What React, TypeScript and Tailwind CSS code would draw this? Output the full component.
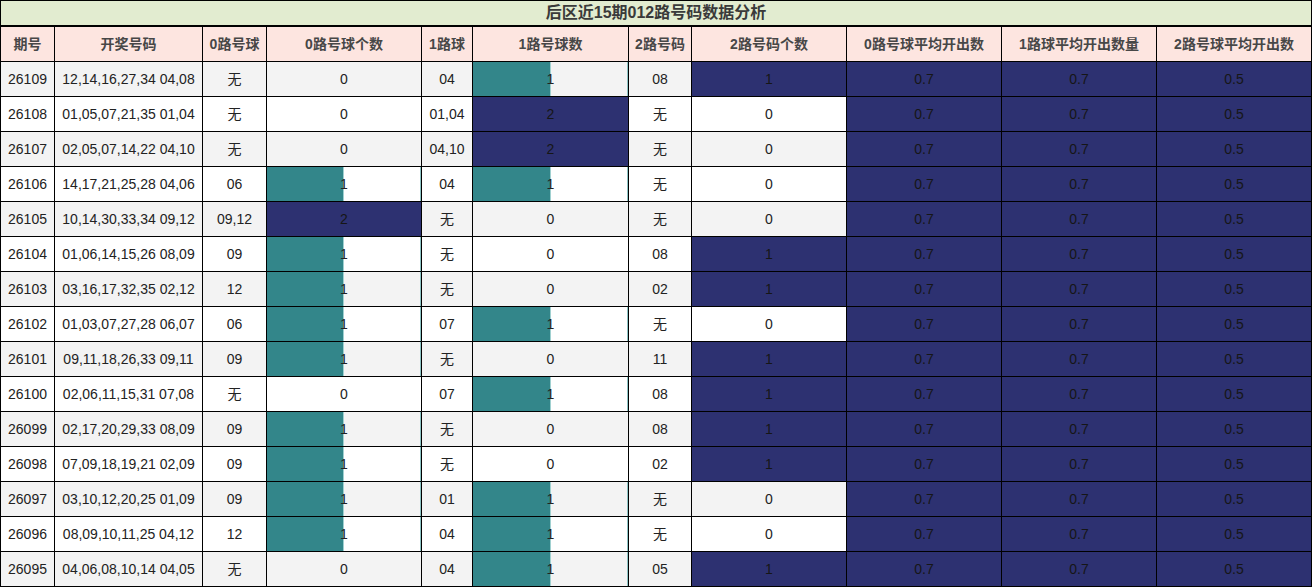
type Row = {
  issue: string;
  draw: string;
  r0: string;
  c0: number;
  r1: string;
  c1: number;
  r2: string;
  c2: number;
};

const rows: Row[] = [
  { issue: "26109", draw: "12,14,16,27,34 04,08", r0: "无", c0: 0, r1: "04", c1: 1, r2: "08", c2: 1 },
  { issue: "26108", draw: "01,05,07,21,35 01,04", r0: "无", c0: 0, r1: "01,04", c1: 2, r2: "无", c2: 0 },
  { issue: "26107", draw: "02,05,07,14,22 04,10", r0: "无", c0: 0, r1: "04,10", c1: 2, r2: "无", c2: 0 },
  { issue: "26106", draw: "14,17,21,25,28 04,06", r0: "06", c0: 1, r1: "04", c1: 1, r2: "无", c2: 0 },
  { issue: "26105", draw: "10,14,30,33,34 09,12", r0: "09,12", c0: 2, r1: "无", c1: 0, r2: "无", c2: 0 },
  { issue: "26104", draw: "01,06,14,15,26 08,09", r0: "09", c0: 1, r1: "无", c1: 0, r2: "08", c2: 1 },
  { issue: "26103", draw: "03,16,17,32,35 02,12", r0: "12", c0: 1, r1: "无", c1: 0, r2: "02", c2: 1 },
  { issue: "26102", draw: "01,03,07,27,28 06,07", r0: "06", c0: 1, r1: "07", c1: 1, r2: "无", c2: 0 },
  { issue: "26101", draw: "09,11,18,26,33 09,11", r0: "09", c0: 1, r1: "无", c1: 0, r2: "11", c2: 1 },
  { issue: "26100", draw: "02,06,11,15,31 07,08", r0: "无", c0: 0, r1: "07", c1: 1, r2: "08", c2: 1 },
  { issue: "26099", draw: "02,17,20,29,33 08,09", r0: "09", c0: 1, r1: "无", c1: 0, r2: "08", c2: 1 },
  { issue: "26098", draw: "07,09,18,19,21 02,09", r0: "09", c0: 1, r1: "无", c1: 0, r2: "02", c2: 1 },
  { issue: "26097", draw: "03,10,12,20,25 01,09", r0: "09", c0: 1, r1: "01", c1: 1, r2: "无", c2: 0 },
  { issue: "26096", draw: "08,09,10,11,25 04,12", r0: "12", c0: 1, r1: "04", c1: 1, r2: "无", c2: 0 },
  { issue: "26095", draw: "04,06,08,10,14 04,05", r0: "无", c0: 0, r1: "04", c1: 1, r2: "05", c2: 1 },
];

const headers = [
  "期号",
  "开奖号码",
  "0路号球",
  "0路号球个数",
  "1路球",
  "1路号球数",
  "2路号码",
  "2路号码个数",
  "0路号球平均开出数",
  "1路球平均开出数量",
  "2路号球平均开出数",
];

const grid =
  "grid grid-cols-[54px_148px_64px_155px_51px_156px_63px_155px_155px_155px_156px]";
const cell = "border-l border-black flex items-center justify-center";

// count cell with data bar: 1 = half teal bar, 2 = full navy
const BarCell = ({ value }: { value: number }) => {
  if (value >= 2) {
    return <div className={`${cell} bg-[#2d3171] text-[#161616]`}>{value}</div>;
  }
  return (
    <div className={`${cell} relative`}>
      {value > 0 && (
        <>
          <div
            className="absolute left-0 top-0 bottom-0 bg-[#33868a] border-r border-[#9fd0d0]"
            style={{ width: `${(value / 2) * 100}%` }}
          />
          <div className="absolute right-0 top-0 bottom-0 w-px bg-[#8cc3c3]" />
        </>
      )}
      <span className="relative">{value}</span>
    </div>
  );
};

export default function App() {
  return (
    <div
      className="w-[1312px] h-[587px] bg-white text-[14px] text-[#222]"
      style={{ fontFamily: '"Liberation Sans", "Noto Sans CJK SC", sans-serif' }}
    >
      <div className="border-t border-black">
        {/* title */}
        <div className="h-[26px] border-x border-b-2 border-black bg-[#e2ecd0] flex items-center justify-center text-[16px] font-bold text-[#3a3a3a] leading-none">
          后区近15期012路号码数据分析
        </div>

        {/* header */}
        <div className={`${grid} h-[35px] border-b border-black bg-[#fde5e0]`}>
          {headers.map((h, i) => (
            <div
              key={h}
              className={`${cell} font-bold text-[#474747] ${i === headers.length - 1 ? "border-r" : ""}`}
            >
              {h}
            </div>
          ))}
        </div>

        {/* rows */}
        {rows.map((r, idx) => (
          <div
            key={r.issue}
            className={`${grid} h-[35px] border-b border-black ${idx % 2 === 0 ? "bg-[#f3f3f3]" : "bg-white"}`}
          >
            <div className={cell}>{r.issue}</div>
            <div className={cell}>{r.draw}</div>
            <div className={cell}>{r.r0}</div>
            <BarCell value={r.c0} />
            <div className={cell}>{r.r1}</div>
            <BarCell value={r.c1} />
            <div className={cell}>{r.r2}</div>
            <div className={`${cell} ${r.c2 > 0 ? "bg-[#2d3171] text-[#161616]" : ""}`}>{r.c2}</div>
            <div className={`${cell} bg-[#2d3171] text-[#161616]`}>0.7</div>
            <div className={`${cell} bg-[#2d3171] text-[#161616]`}>0.7</div>
            <div className={`${cell} border-r bg-[#2d3171] text-[#161616]`}>0.5</div>
          </div>
        ))}
      </div>
    </div>
  );
}
